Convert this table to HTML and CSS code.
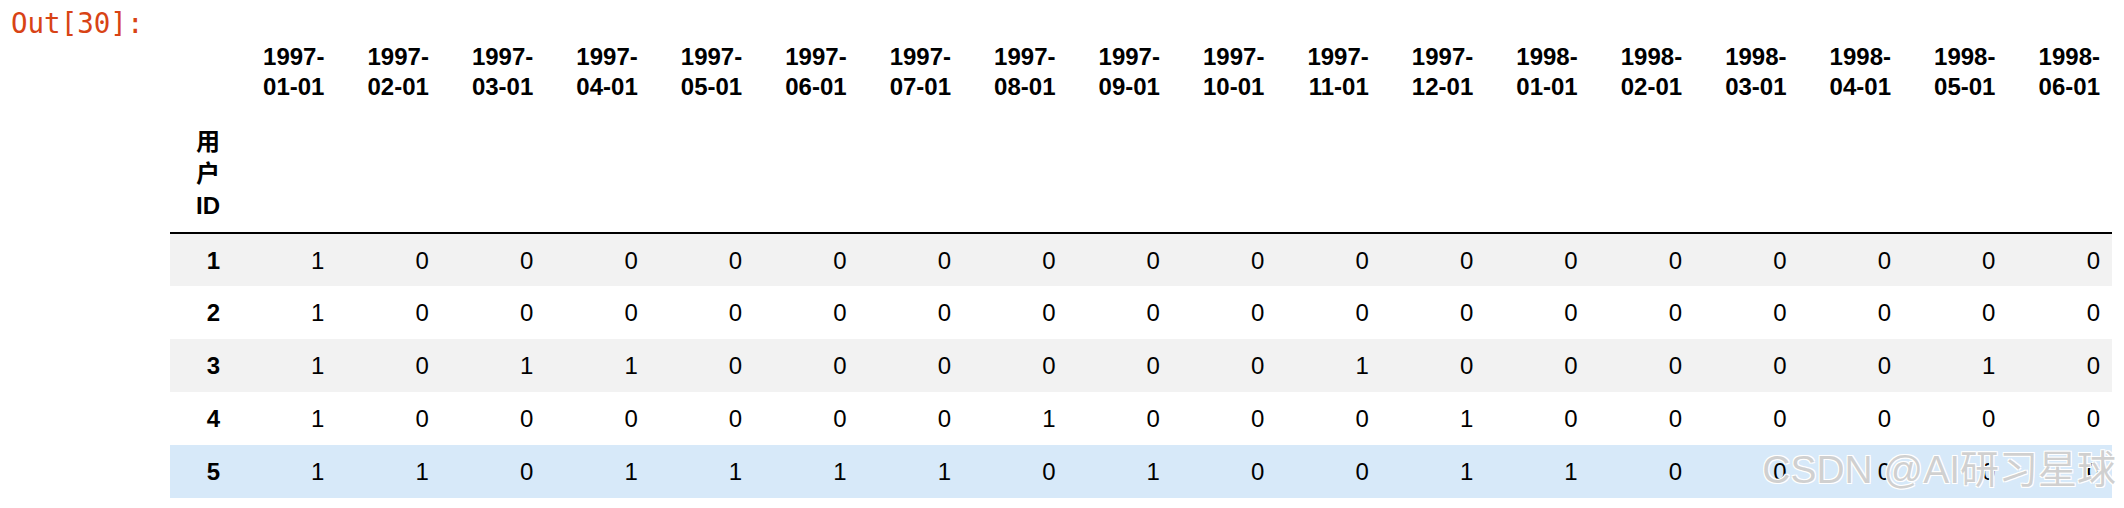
FILE: index.html
```html
<!DOCTYPE html>
<html lang="zh">
<head>
  <meta charset="UTF-8" />
  <title>Out[30]</title>
  <link rel="stylesheet" href="styles.css">
</head>
<body>

  <div class="output">
    <div class="prompt">Out[30]:</div>

    <table class="dataframe">
      <colgroup>
        <col class="col-index">
        <col span="18" class="col-data">
      </colgroup>
      <thead>
        <tr class="head-dates">
          <th></th>
          <th>1997-01-01</th>
          <th>1997-02-01</th>
          <th>1997-03-01</th>
          <th>1997-04-01</th>
          <th>1997-05-01</th>
          <th>1997-06-01</th>
          <th>1997-07-01</th>
          <th>1997-08-01</th>
          <th>1997-09-01</th>
          <th>1997-10-01</th>
          <th>1997-11-01</th>
          <th>1997-12-01</th>
          <th>1998-01-01</th>
          <th>1998-02-01</th>
          <th>1998-03-01</th>
          <th>1998-04-01</th>
          <th>1998-05-01</th>
          <th>1998-06-01</th>
        </tr>
        <tr class="head-index">
          <th>用户ID</th>
          <th></th><th></th><th></th><th></th><th></th><th></th>
          <th></th><th></th><th></th><th></th><th></th><th></th>
          <th></th><th></th><th></th><th></th><th></th><th></th>
        </tr>
      </thead>
      <tbody id="rows">
        <!-- rows filled below -->
      </tbody>
    </table>
  </div>

  <div class="watermark">CSDN @AI研习星球</div>

  <script>
    const data = {
      1: [1,0,0,0,0,0,0,0,0,0,0,0,0,0,0,0,0,0],
      2: [1,0,0,0,0,0,0,0,0,0,0,0,0,0,0,0,0,0],
      3: [1,0,1,1,0,0,0,0,0,0,1,0,0,0,0,0,1,0],
      4: [1,0,0,0,0,0,0,1,0,0,0,1,0,0,0,0,0,0],
      5: [1,1,0,1,1,1,1,0,1,0,0,1,1,0,0,0,0,0]
    };

    const tbody = document.getElementById("rows");

    Object.keys(data).forEach(id => {
      const tr = document.createElement("tr");
      if (id === "5") tr.className = "hover";

      const th = document.createElement("th");
      th.textContent = id;
      tr.appendChild(th);

      data[id].forEach(v => {
        const td = document.createElement("td");
        td.textContent = v;
        tr.appendChild(td);
      });

      tbody.appendChild(tr);
    });
  </script>
</body>
</html>
```

FILE: styles.css
```css
* {
  box-sizing: border-box;
  margin: 0;
  padding: 0;
}

body {
  background: #fff;
  color: #000;
  position: relative;
  width: 2124px;
  height: 508px;
  overflow: hidden;
}

.output {
  display: flex;
  align-items: flex-start;
}

.prompt {
  width: 170px;
  flex: none;
  padding: 10px 0 0 11px;
  font-family: "DejaVu Sans Mono", monospace;
  font-size: 27.5px;
  line-height: 27px;
  color: #d84315;
}

/* Table */
.dataframe {
  margin-top: 30px;
  width: 1942px;
  table-layout: fixed;
  border-collapse: collapse;
  border: none;
  font-family: "Liberation Sans", "Noto Sans CJK SC", sans-serif;
  font-size: 24px;
}

.col-index {
  width: 62px;
}

.col-data {
  width: 104.44px;
}

.dataframe th,
.dataframe td {
  text-align: right;
  vertical-align: middle;
  padding: 0 12px;
  border: none;
}

.dataframe th {
  font-weight: bold;
}

.head-dates th {
  padding-top: 12px;
  padding-bottom: 12px;
  line-height: 30px;
  vertical-align: bottom;
}

.head-index th {
  padding-top: 12px;
  padding-bottom: 10px;
  line-height: 32px;
  border-bottom: 2px solid #000;
}

.dataframe tbody tr {
  height: 53px;
  line-height: 27px;
}

.dataframe tbody tr:nth-child(odd) {
  background: #f2f2f2;
}

.dataframe tbody tr.hover {
  background: #d7e9f9;
}

/* CSDN watermark over the last row */
.watermark {
  position: absolute;
  right: 8px;
  top: 448px;
  font-family: "Liberation Sans", "Noto Sans CJK SC", sans-serif;
  font-size: 39px;
  line-height: 44px;
  color: rgba(200, 200, 200, 0.85);
  text-shadow: 1px 1px 0 #fff, -1px -1px 0 #fff, 1px -1px 0 #fff, -1px 1px 0 #fff;
  white-space: nowrap;
}
```
